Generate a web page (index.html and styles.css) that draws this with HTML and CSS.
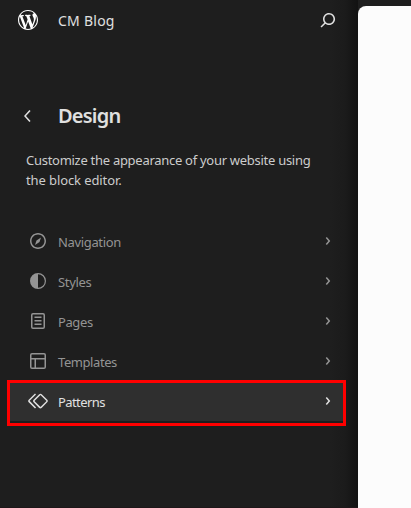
FILE: index.html
```html
<!DOCTYPE html>
<html lang="en">
<head>
<meta charset="utf-8">
<title>CM Blog</title>
<link rel="stylesheet" href="styles.css">
</head>
<body>
<div class="app">
  <aside class="sidebar">
    <header class="hub">
      <svg class="logo" viewBox="0 0 20 20"><path d="M20 10c0-5.51-4.49-10-10-10C4.48 0 0 4.49 0 10c0 5.52 4.48 10 10 10 5.51 0 10-4.48 10-10zM7.78 15.37L4.37 6.22c.55-.02 1.17-.08 1.17-.08.5-.06.44-1.13-.06-1.11 0 0-1.45.11-2.37.11-.18 0-.37 0-.58-.01C4.12 2.69 6.87 1.11 10 1.11c2.33 0 4.45.87 6.05 2.34-.68-.11-1.65.39-1.65 1.58 0 .74.45 1.36.9 2.1.35.61.55 1.36.55 2.46 0 1.49-1.4 5-1.4 5l-3.03-8.37c.54-.02.82-.17.82-.17.5-.05.44-1.25-.06-1.22 0 0-1.44.12-2.38.12-.87 0-2.33-.12-2.33-.12-.5-.03-.56 1.2-.06 1.22l.92.08 1.26 3.41zM17.41 10c.24-.64.74-1.87.43-4.25.7 1.29 1.05 2.71 1.05 4.25 0 3.29-1.73 6.24-4.4 7.78.97-2.59 1.94-5.2 2.92-7.78zM6.1 18.09C3.12 16.65 1.11 13.53 1.11 10c0-1.3.23-2.48.72-3.59C3.25 10.3 4.67 14.2 6.1 18.09zm4.03-6.63l2.58 6.98c-.86.29-1.76.45-2.71.45-.79 0-1.57-.11-2.29-.33.81-2.38 1.62-4.74 2.42-7.1z"/></svg>
      <span class="site">CM Blog</span>
      <svg class="icon" viewBox="0 0 24 24"><path d="M13 5c-3.3 0-6 2.7-6 6 0 1.4.5 2.7 1.3 3.7l-3.8 3.8 1.1 1.1 3.8-3.8c1 .8 2.3 1.3 3.7 1.3 3.3 0 6-2.7 6-6S16.3 5 13 5zm0 10.5c-2.5 0-4.5-2-4.5-4.5s2-4.5 4.5-4.5 4.5 2 4.5 4.5-2 4.5-4.5 4.5z"/></svg>
    </header>
    <div class="heading">
      <svg class="icon" viewBox="0 0 24 24"><path d="M14.6 7l-1.2-1L8 12l5.4 6 1.2-1-4.6-5z"/></svg>
      <h1>Design</h1>
    </div>
    <p class="intro"><span class="line1">Customize the appearance of your website using</span><br><span class="line2">the block editor.</span></p>
    <nav class="menu">
      <a class="item">
        <svg class="icon" viewBox="0 0 24 24"><path d="M12 4c-4.4 0-8 3.6-8 8s3.6 8 8 8 8-3.6 8-8-3.6-8-8-8zm0 14.5c-3.6 0-6.5-2.9-6.5-6.5S8.4 5.5 12 5.5s6.5 2.9 6.5 6.5-2.9 6.5-6.5 6.5zM9 16l4.5-3L15 8.4l-4.5 3L9 16z"/></svg>
        <span class="label">Navigation</span>
        <svg class="icon" viewBox="0 0 24 24"><path d="M10.86 8.04l3.42 3.99-3.42 3.99-1.14-.98 2.58-3.01-2.58-3.01z"/></svg>
      </a>
      <a class="item">
        <svg class="icon" viewBox="0 0 24 24"><path fill-rule="evenodd" d="M20 12a8 8 0 1 1-16 0 8 8 0 0 1 16 0zm-1.2 0a6.8 6.8 0 0 1-6.8 6.8V5.2a6.8 6.8 0 0 1 6.8 6.8z"/></svg>
        <span class="label">Styles</span>
        <svg class="icon" viewBox="0 0 24 24"><path d="M10.86 8.04l3.42 3.99-3.42 3.99-1.14-.98 2.58-3.01-2.58-3.01z"/></svg>
      </a>
      <a class="item">
        <svg class="icon" viewBox="0 0 24 24"><path d="M15.5 7.5h-7V9h7V7.5zm-7 3.5h7v1.5h-7V11zm7 3.5h-7V16h7v-1.5z"/><path fill-rule="evenodd" d="M17 4H7a2 2 0 0 0-2 2v12a2 2 0 0 0 2 2h10a2 2 0 0 0 2-2V6a2 2 0 0 0-2-2zM7 5.5h10a.5.5 0 0 1 .5.5v12a.5.5 0 0 1-.5.5H7a.5.5 0 0 1-.5-.5V6a.5.5 0 0 1 .5-.5z"/></svg>
        <span class="label pages">Pages</span>
        <svg class="icon" viewBox="0 0 24 24"><path d="M10.86 8.04l3.42 3.99-3.42 3.99-1.14-.98 2.58-3.01-2.58-3.01z"/></svg>
      </a>
      <a class="item">
        <svg class="icon" viewBox="0 0 24 24"><path d="M18 5.5H6a.5.5 0 0 0-.5.5v3h13V6a.5.5 0 0 0-.5-.5zm.5 5H10v8h8a.5.5 0 0 0 .5-.5v-7.5zm-10 0h-3V18a.5.5 0 0 0 .5.5h2.5v-8zM6 4h12a2 2 0 0 1 2 2v12a2 2 0 0 1-2 2H6a2 2 0 0 1-2-2V6a2 2 0 0 1 2-2z"/></svg>
        <span class="label templates">Templates</span>
        <svg class="icon" viewBox="0 0 24 24"><path d="M10.86 8.04l3.42 3.99-3.42 3.99-1.14-.98 2.58-3.01-2.58-3.01z"/></svg>
      </a>
      <a class="item active">
        <svg class="icon" viewBox="0 0 24 24"><path d="M21.3 10.8l-5.6-5.6c-.7-.7-1.8-.7-2.5 0l-5.6 5.6c-.7.7-.7 1.8 0 2.5l5.6 5.6c.3.3.8.5 1.2.5s.9-.2 1.2-.5l5.6-5.6c.8-.7.8-1.9.1-2.5zm-1 1.4l-5.6 5.6c-.1.1-.3.1-.4 0l-5.6-5.6c-.1-.1-.1-.3 0-.4l5.6-5.6s.1-.1.2-.1.1 0 .2.1l5.6 5.6c.1.1.1.3 0 .4zm-16.6-.4L10 5.5l-1-1-6.3 6.3c-.7.7-.7 1.8 0 2.5L9 19.5l1.1-1.1-6.3-6.3c-.2 0-.2-.2-.1-.3z"/></svg>
        <span class="label patterns">Patterns</span>
        <svg class="icon" viewBox="0 0 24 24"><path d="M10.86 8.04l3.42 3.99-3.42 3.99-1.14-.98 2.58-3.01-2.58-3.01z"/></svg>
      </a>
    </nav>
  </aside>
  <main class="canvas"></main>
</div>
</body>
</html>
```
FILE: styles.css
```css
* { box-sizing: border-box; }
body {
  margin: 0;
  background: #1e1e1e;
  color: #e0e0e0;
  font-family: "Noto Sans", "Open Sans", sans-serif;
  font-size: 13px;
}
.app {
  display: flex;
  height: 508px;
  overflow: hidden;
}
.sidebar {
  width: 358px;
  flex: none;
  border-bottom: 1px solid #1e1719;
  background: linear-gradient(90deg, #1e1e1e 330px, #1b1b1b 345px, #121212 358px);
}
.icon { width: 24px; height: 24px; flex: none; fill: currentColor; }
.hub {
  display: flex;
  align-items: center;
  height: 40px;
  padding: 0 18px;
}
.logo { width: 20px; height: 20px; fill: #fff; }
.site {
  flex: 1;
  margin-left: 20px;
  font-size: 14px;
  letter-spacing: 0.25px;
}
.hub .icon { margin-right: 0; }
.heading {
  display: flex;
  align-items: center;
  height: 32px;
  margin-top: 60px;
  padding-left: 16px;
}
h1 {
  margin: 0 0 0 18px;
  font-size: 20px;
  font-weight: 600;
  line-height: 32px;
  letter-spacing: -0.8px;
}
.intro {
  margin: 18px 0 0 26px;
  line-height: 20px;
  color: #ccc;
  white-space: nowrap;
}
.line1 { letter-spacing: -0.28px; }
.line2 { letter-spacing: -0.1px; }
.menu { margin: 31px 15px 0 10px; }
.item {
  display: flex;
  align-items: center;
  height: 40px;
  padding: 0 3px 0 16px;
  color: #949494;
}
.label {
  flex: 1;
  margin-left: 8px;
  padding-top: 2px;
  letter-spacing: -0.35px;
}
.templates { letter-spacing: -0.42px; }
.pages { letter-spacing: -0.4px; }
.patterns { letter-spacing: -0.58px; }
.active {
  height: 42px;
  margin-top: 2px;
  padding-bottom: 6px;
  color: #e0e0e0;
  background: linear-gradient(#2f2f2f 38px, #1e1e1e 38px);
  height: 40px;
  padding-bottom: 4px;
  outline: 3px solid #f00;
}
.canvas {
  flex: 1;
  margin-top: 6px;
  background: #fcfcfc;
  border-top-left-radius: 8px;
}
```
